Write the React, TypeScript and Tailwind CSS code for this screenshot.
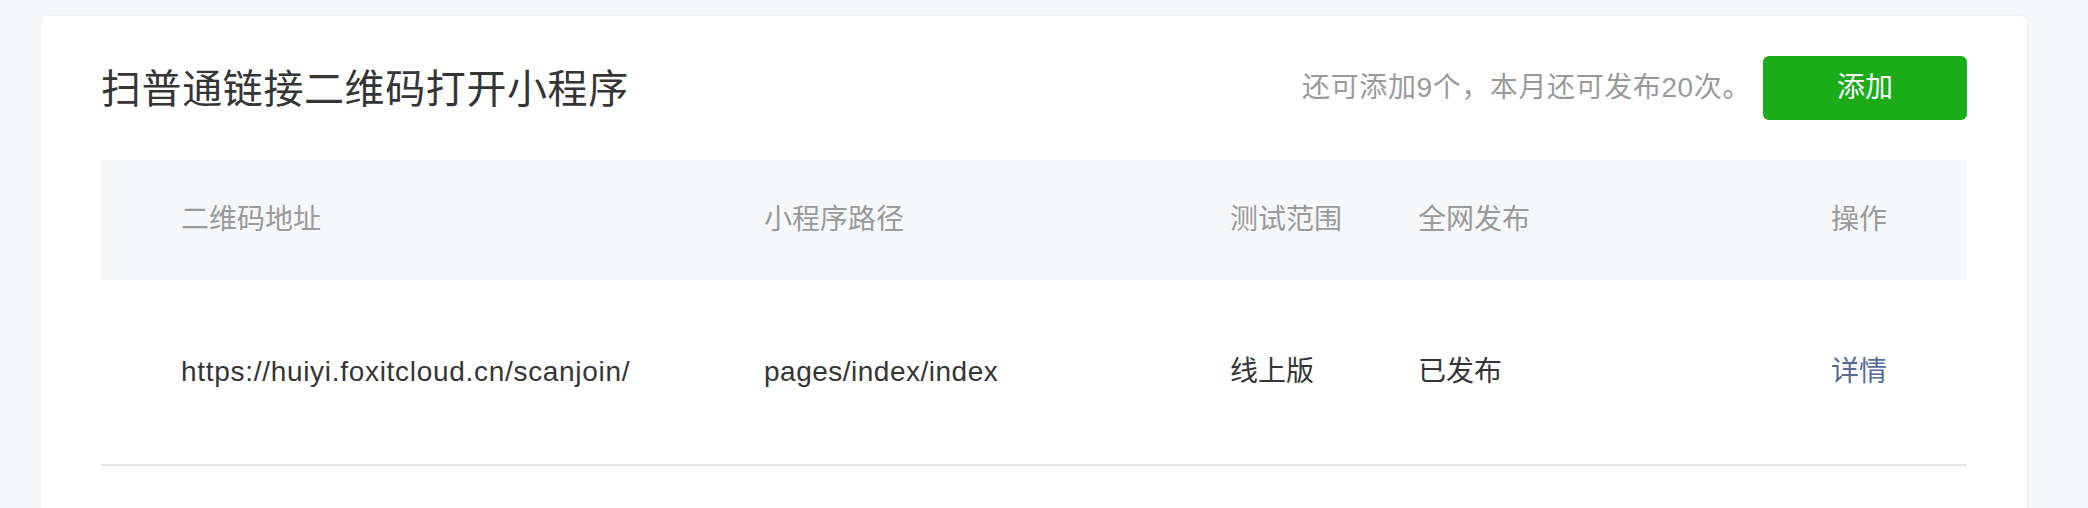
const font = { fontFamily: '"Liberation Sans", "Noto Sans CJK SC", sans-serif' };

type Row = {
  url: string;
  path: string;
  scope: string;
  status: string;
};

const rows: Row[] = [
  {
    url: 'https://huiyi.foxitcloud.cn/scanjoin/',
    path: 'pages/index/index',
    scope: '线上版',
    status: '已发布',
  },
];

// 列宽和参考图对齐
const cols = 'grid grid-cols-[663px_466px_188px_413px_1fr]';

export default function App() {
  return (
    <div
      className="h-[508px] w-full overflow-hidden bg-[#f6f7f9] pl-[41px] pr-[61px] pt-[16px]"
      style={font}
    >
      <div className="min-h-[600px] rounded-[6px] bg-white px-[60px] shadow-[0_0_3px_rgba(0,0,0,0.06)]">
        <div className="flex h-[144px] items-center justify-between">
          <h1 className="mt-[2px] text-[40px] leading-[40px] font-normal tracking-[0.6px] text-[#353535]">
            扫普通链接二维码打开小程序
          </h1>
          <div className="flex items-center">
            <span className="text-[28px] leading-[28px] tracking-[0.6px] text-[#9a9a9a]">
              还可添加9个，本月还可发布20次。
            </span>
            <button className="ml-[12px] h-[64px] w-[204px] rounded-[6px] bg-[#1aad19] text-[28px] text-white">
              添加
            </button>
          </div>
        </div>

        <div className={`${cols} h-[120px] items-center bg-[#f6f7f9] text-[28px] text-[#9a9a9a]`}>
          <div className="pl-[80px]">二维码地址</div>
          <div>小程序路径</div>
          <div>测试范围</div>
          <div>全网发布</div>
          <div className="text-right pr-[80px]">操作</div>
        </div>

        {rows.map((r) => (
          <div
            key={r.url}
            className={`${cols} h-[186px] items-center border-b-2 border-[#e5e5ea] text-[28px] text-[#353535]`}
          >
            <div className="pl-[80px] tracking-[0.7px]">{r.url}</div>
            <div className="tracking-[0.5px]">{r.path}</div>
            <div>{r.scope}</div>
            <div>{r.status}</div>
            <div className="text-right pr-[80px] text-[#576b95]">详情</div>
          </div>
        ))}
      </div>
    </div>
  );
}
